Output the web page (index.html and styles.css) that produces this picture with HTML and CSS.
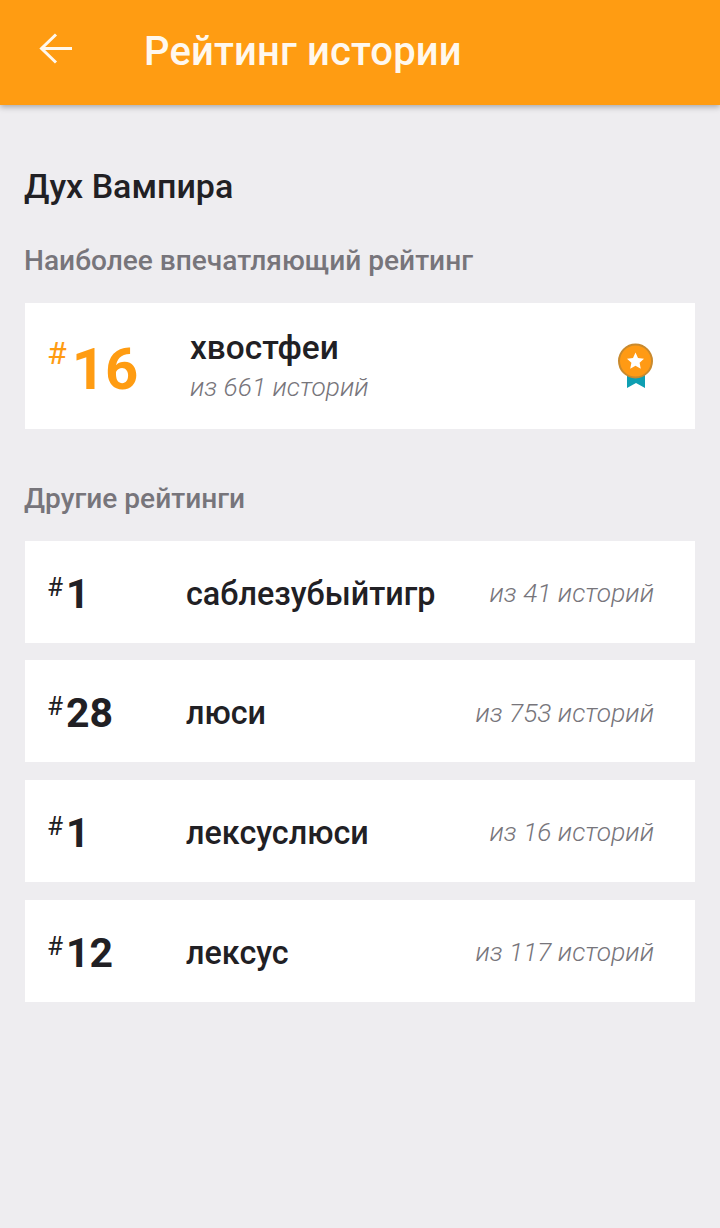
FILE: index.html
```html
<!DOCTYPE html>
<html>

<head>
    <meta charset="utf-8">
    <meta name="viewport" content="width=device-width">
    <link rel="stylesheet" href="styles.css">
</head>

<body>
    <header class="toolbar">
        <svg class="back" width="36" height="32" viewBox="0 0 36 32">
            <path d="M34 15.500H4M18 1.500 3.500 15.500 18 29.500" fill="none" stroke="#fff8ee" stroke-width="3"/>
        </svg>
        <h1 class="toolbar-title">Рейтинг истории</h1>
    </header>
    <main class="content">
        <h2 class="story-name">Дух Вампира</h2>
        <h3 class="section-title best-title">Наиболее впечатляющий рейтинг</h3>
        <div class="best-card">
            <div class="best-rank"><span class="hash">#</span>16</div>
            <div class="best-info">
                <div class="best-tag">хвостфеи</div>
                <div class="count">из 661 историй</div>
            </div>
            <svg class="medal" width="38" height="46" viewBox="0 0 38 46">
                <path d="M11 26H29V45L20 40 11 45Z" fill="#0e9fb2"/>
                <circle cx="19.500" cy="18" r="16.500" fill="#ff9a14" stroke="#c98a2e" stroke-width="2"/>
                <path d="M19.500 9.500 22 15 28 15.700 23.600 19.800 24.800 25.800 19.500 22.800 14.200 25.800 15.400 19.800 11 15.700 17 15Z" fill="#fff"/>
            </svg>
        </div>
        <h3 class="section-title other-title">Другие рейтинги</h3>
        <div class="rank-list">
            <div class="rank-row">
                <div class="rank"><span class="hash">#</span>1</div>
                <div class="tag">саблезубыйтигр</div>
                <div class="count">из 41 историй</div>
            </div>
            <div class="rank-row">
                <div class="rank"><span class="hash">#</span>28</div>
                <div class="tag">люси</div>
                <div class="count">из 753 историй</div>
            </div>
            <div class="rank-row">
                <div class="rank"><span class="hash">#</span>1</div>
                <div class="tag">лексуслюси</div>
                <div class="count">из 16 историй</div>
            </div>
            <div class="rank-row">
                <div class="rank"><span class="hash">#</span>12</div>
                <div class="tag">лексус</div>
                <div class="count">из 117 историй</div>
            </div>
        </div>
    </main>
</body>

</html>
```

FILE: styles.css
```css
html,
body {
    height: 100%;
}

body {
    margin: 0;
    background: #eeedf0;
    font-family: Roboto, "Noto Sans", sans-serif;
    color: #212024;
}

h1,
h2,
h3 {
    margin: 0;
}

.toolbar {
    display: flex;
    align-items: center;
    height: 105px;
    padding: 0 0 2px 38px;
    box-sizing: border-box;
    background: #ff9c12;
    box-shadow: 0 2px 6px rgba(0, 0, 0, 0.3);
}

.back {
    margin-right: 70px;
    margin-bottom: 6px;
}

.toolbar-title {
    font-size: 40px;
    letter-spacing: 0.15px;
    font-weight: 500;
    color: #fff8ee;
}

.content {
    padding: 0 25px;
}

.story-name {
    margin-top: 59px;
    margin-left: -1px;
    font-size: 34px;
    line-height: 44px;
    font-weight: 500;
}

.section-title {
    margin-left: -1px;
    font-size: 28.100px;
    line-height: 36px;
    font-weight: 500;
    color: #77757b;
}

.best-title {
    margin-top: 35px;
}

.other-title {
    margin-top: 52px;
}

.best-card {
    display: flex;
    align-items: center;
    height: 126px;
    margin-top: 24px;
    padding: 0 41px 0 22px;
    background: #fff;
}

.best-rank {
    width: 143px;
    padding-top: 4px;
    font-size: 58px;
    font-weight: 700;
    color: #ff9c12;
}

.hash {
    font-size: 32px;
    font-weight: 400;
    vertical-align: 25px;
    margin-right: 5px;
}

.best-info {
    flex: 1;
    padding-top: 3px;
}

.best-tag {
    font-size: 33.400px;
    line-height: 38px;
    font-weight: 500;
}

.count {
    font-size: 26.300px;
    font-weight: 300;
    font-style: italic;
    color: #77757b;
}

.best-info .count {
    line-height: 40px;
}

.rank-list {
    display: flex;
    flex-direction: column;
    gap: 17.600px;
    margin-top: 23.800px;
}

.rank-row {
    display: flex;
    align-items: center;
    height: 102px;
    padding: 0 41px 0 22px;
    background: #fff;
}

.rank {
    width: 139px;
    padding-top: 4px;
    font-size: 41px;
    font-weight: 700;
}

.rank .hash {
    font-size: 26px;
    vertical-align: 12px;
    margin-right: 3px;
}

.tag {
    flex: 1;
    padding-top: 4px;
    font-size: 32.300px;
    font-weight: 500;
}

.rank-row .count {
    padding-top: 3px;
}
```
